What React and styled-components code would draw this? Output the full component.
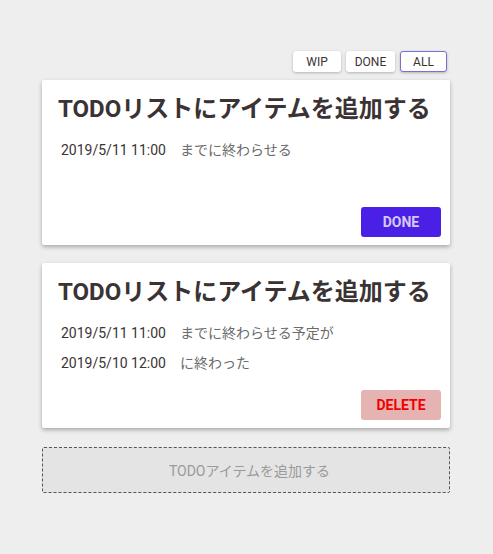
import styled, { createGlobalStyle } from "styled-components";

const GlobalStyle = createGlobalStyle`
  body {
    margin: 0;
    background: #eeeeee;
    font-family: Roboto, "Noto Sans CJK JP", sans-serif;
    color: #3b3333;
  }
`;

const Page = styled.div`
  width: 408px;
  margin-left: 42px;
  padding-top: 51px;
  display: flex;
  flex-direction: column;
`;

const Filters = styled.div`
  display: flex;
  justify-content: flex-end;
  gap: 5px;
  padding-right: 3px;
  margin-bottom: 8px;
`;

const FilterButton = styled.button`
  width: ${(p) => p.$w}px;
  height: 21px;
  padding: 0;
  background: #fff;
  border: 1px solid ${(p) => (p.$active ? "#7b6fd6" : "transparent")};
  border-radius: 3px;
  box-shadow: 0 1px 3px rgba(0, 0, 0, 0.25);
  font-family: Roboto, sans-serif;
  font-size: 12px;
  color: #3b3333;
`;

const Card = styled.div`
  height: 165px;
  background: #fff;
  border-radius: 2px;
  box-shadow: 0 2px 4px rgba(0, 0, 0, 0.3);
  margin-bottom: 18px;
  display: flex;
  flex-direction: column;
  padding: 13px 9px 8px 16px;
  box-sizing: border-box;
`;

const Title = styled.h2`
  margin: 0 0 10px;
  font-size: 24px;
  line-height: 32px;
  font-weight: 700;
  color: #3b3333;
`;

const Row = styled.div`
  display: flex;
  gap: 14px;
  font-size: 14px;
  line-height: 30px;
  padding-left: 3px;
`;

const Date = styled.span`
  color: #3b3333;
`;

const Note = styled.span`
  color: #6b6b6b;
`;

const Actions = styled.div`
  margin-top: auto;
  display: flex;
  justify-content: flex-end;
`;

const ActionButton = styled.button`
  width: 80px;
  height: 30px;
  border: none;
  border-radius: 3px;
  font-family: Roboto, sans-serif;
  font-weight: 700;
  font-size: 14px;
  background: ${(p) => (p.$danger ? "#e6b3b3" : "#4b20e6")};
  color: ${(p) => (p.$danger ? "#f00000" : "#d4caf5")};
`;

const AddButton = styled.button`
  height: 46px;
  margin-top: 1px;
  padding: 0 0 0 7px;
  background: #e4e4e4;
  border: 1px dashed #555;
  border-radius: 2px;
  font-family: Roboto, "Noto Sans CJK JP", sans-serif;
  font-size: 14px;
  color: #9a9a9a;
`;

export default function App() {
  return (
    <>
      <GlobalStyle />
      <Page>
        <Filters>
          <FilterButton $w={48}>WIP</FilterButton>
          <FilterButton $w={49}>DONE</FilterButton>
          <FilterButton $w={47} $active>
            ALL
          </FilterButton>
        </Filters>
        <Card>
          <Title>TODOリストにアイテムを追加する</Title>
          <Row>
            <Date>2019/5/11 11:00</Date>
            <Note>までに終わらせる</Note>
          </Row>
          <Actions>
            <ActionButton>DONE</ActionButton>
          </Actions>
        </Card>
        <Card>
          <Title>TODOリストにアイテムを追加する</Title>
          <Row>
            <Date>2019/5/11 11:00</Date>
            <Note>までに終わらせる予定が</Note>
          </Row>
          <Row>
            <Date>2019/5/10 12:00</Date>
            <Note>に終わった</Note>
          </Row>
          <Actions>
            <ActionButton $danger>DELETE</ActionButton>
          </Actions>
        </Card>
        <AddButton>TODOアイテムを追加する</AddButton>
      </Page>
    </>
  );
}
